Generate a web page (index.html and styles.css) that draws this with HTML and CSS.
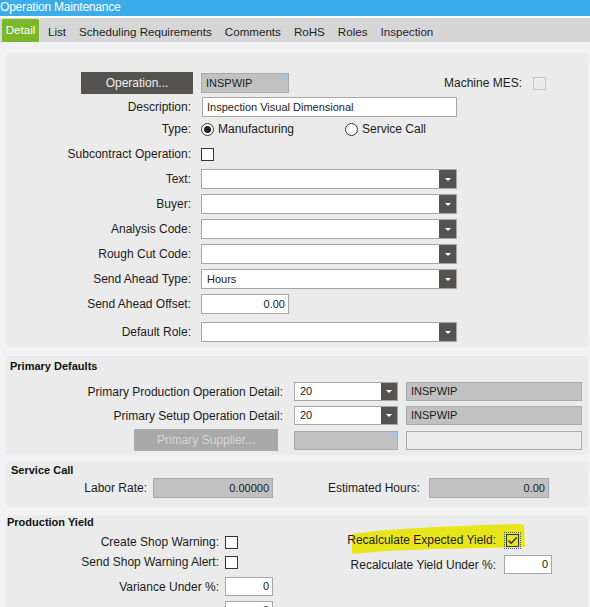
FILE: index.html
```html
<!DOCTYPE html>
<html>
<head>
<meta charset="utf-8">
<title>Operation Maintenance</title>
<link rel="stylesheet" href="styles.css">
</head>
<body>
<div class="titlebar">Operation Maintenance</div>
<nav class="tabs">
  <span class="tab active">Detail</span>
  <span class="tab first">List</span>
  <span class="tab">Scheduling Requirements</span>
  <span class="tab">Comments</span>
  <span class="tab">RoHS</span>
  <span class="tab">Roles</span>
  <span class="tab insp">Inspection</span>
</nav>
<main class="content">
  <section class="panel general">
    <div class="row op-row">
      <button class="btn-dark">Operation...</button>
      <div class="field ro corner op-id">INSPWIP</div>
      <span class="lbl-mes">Machine MES:</span>
      <span class="chk disabled"></span>
    </div>
    <div class="row r-desc">
      <span class="lbl">Description:</span>
      <div class="field input desc">Inspection Visual Dimensional</div>
    </div>
    <div class="row r-type">
      <span class="lbl">Type:</span>
      <span class="radio-opt mfg"><span class="radio on"></span>Manufacturing</span>
      <span class="radio-opt"><span class="radio"></span>Service Call</span>
    </div>
    <div class="row r-sub">
      <span class="lbl">Subcontract Operation:</span>
      <span class="chk"></span>
    </div>
    <div class="row r-dd">
      <span class="lbl">Text:</span>
      <div class="combo wide"><span class="val"></span><span class="arr"></span></div>
    </div>
    <div class="row r-dd">
      <span class="lbl">Buyer:</span>
      <div class="combo wide"><span class="val"></span><span class="arr"></span></div>
    </div>
    <div class="row r-dd">
      <span class="lbl">Analysis Code:</span>
      <div class="combo wide"><span class="val"></span><span class="arr"></span></div>
    </div>
    <div class="row r-dd">
      <span class="lbl">Rough Cut Code:</span>
      <div class="combo wide"><span class="val"></span><span class="arr"></span></div>
    </div>
    <div class="row r-dd">
      <span class="lbl">Send Ahead Type:</span>
      <div class="combo wide"><span class="val">Hours</span><span class="arr"></span></div>
    </div>
    <div class="row r-dd">
      <span class="lbl">Send Ahead Offset:</span>
      <div class="field input num offset">0.00</div>
    </div>
    <div class="row r-role">
      <span class="lbl">Default Role:</span>
      <div class="combo wide"><span class="val"></span><span class="arr"></span></div>
    </div>
  </section>

  <section class="panel prim">
    <h3 class="ph">Primary Defaults</h3>
    <div class="row r-pa">
      <span class="lbl">Primary Production Operation Detail:</span>
      <div class="combo small"><span class="val">20</span><span class="arr"></span></div>
      <div class="field ro long">INSPWIP</div>
    </div>
    <div class="row r-pb">
      <span class="lbl">Primary Setup Operation Detail:</span>
      <div class="combo small"><span class="val">20</span><span class="arr"></span></div>
      <div class="field ro long">INSPWIP</div>
    </div>
    <div class="row r-pc">
      <button class="btn-off">Primary Supplier...</button>
      <div class="field ro corner sup1"></div>
      <div class="field light long"></div>
    </div>
  </section>

  <section class="panel svc">
    <h3 class="ph">Service Call</h3>
    <div class="row r-svc">
      <span class="lbl l1">Labor Rate:</span>
      <div class="field ro num sf">0.00000</div>
      <span class="lbl l2">Estimated Hours:</span>
      <div class="field ro num sf">0.00</div>
    </div>
  </section>

  <section class="panel yield">
    <svg class="hilite" width="584" height="60" viewBox="0 0 584 60">
      <polygon points="346,19 380,15 430,12 480,10 514,9 518,10 519,32 480,33 430,34 380,36 346,39" fill="#e9e51b"/>
    </svg>
    <h3 class="ph">Production Yield</h3>
    <div class="cols">
      <div class="col left">
        <div class="row y1"><span class="lbl">Create Shop Warning:</span><span class="chk"></span></div>
        <div class="row y2"><span class="lbl">Send Shop Warning Alert:</span><span class="chk"></span></div>
        <div class="row y3"><span class="lbl">Variance Under %:</span><div class="field input num pct">0</div></div>
        <div class="row y4"><span class="lbl"></span><div class="field input num pct">0</div></div>
      </div>
      <div class="col right">
        <div class="row z1">
          <span class="lbl">Recalculate Expected Yield:</span>
          <span class="focus"><span class="chk checked"><svg width="11" height="11" viewBox="0 0 11 11"><polyline points="1.5,5.5 4.2,8.3 9.5,2.5" fill="none" stroke="#2b2b2b" stroke-width="1.4"/></svg></span></span>
        </div>
        <div class="row z2"><span class="lbl">Recalculate Yield Under %:</span><div class="field input num pct2">0</div></div>
      </div>
    </div>
  </section>
</main>
</body>
</html>
```

FILE: styles.css
```css
* { box-sizing: border-box; }
html, body { margin: 0; padding: 0; }
body {
  width: 590px;
  height: 607px;
  overflow: hidden;
  background: #f2f2f4;
  font-family: "Liberation Sans", Arial, sans-serif;
  font-size: 12px;
  color: #1c1c1c;
}

.titlebar {
  height: 18px;
  background: #3cadea;
  border-bottom: 2px solid #fff;
  color: #fff;
  font-size: 12px;
  line-height: 15px;
  white-space: nowrap;
  letter-spacing: -0.2px;
}

.tabs {
  height: 24px;
  background: #d6d6d6;
  display: flex;
  align-items: stretch;
}
.tab {
  font-size: 11.6px;
  line-height: 28px;
  padding: 0 6.5px;
  color: #1c1c1c;
  white-space: nowrap;
}
.tab.active {
  margin-left: 1px;
  width: 39px;
  padding: 0;
  text-align: center;
  background: #79b82a;
  color: #fff;
  border: 1px solid #cfe5b2;
  border-bottom: none;
  border-radius: 3px 3px 0 0;
  line-height: 22px;
}
.tab.first { padding-left: 8px; }
.tab.insp { color: #2e1a3c; }

.content { padding: 11px 2px 0 6px; }
.panel {
  background: #ebebeb;
  border-radius: 4px;
  position: relative;
}
.row { display: flex; align-items: center; }
.lbl { flex: none; text-align: right; white-space: nowrap; }

.field {
  flex: none;
  height: 20px;
  border: 1px solid #a6a6a6;
  font-size: 11px;
  line-height: 18px;
  padding: 0 4px;
  white-space: nowrap;
  overflow: hidden;
  position: relative;
}
.field.input { background: #fff; }
.field.ro { background: #c1c1c1; border-color: #a9a9a9; }
.field.light { background: #ececec; border-color: #ababab; }
.field.num { text-align: right; padding-right: 3px; }
.corner::after {
  content: "";
  position: absolute;
  top: 0;
  right: 0;
  border-top: 8px solid #a9c4e6;
  border-left: 8px solid transparent;
}

.combo {
  flex: none;
  display: flex;
  height: 20px;
  border: 1px solid #a6a6a6;
  background: #fff;
  font-size: 11px;
}
.combo .val { flex: 1; padding-left: 5px; line-height: 18px; }
.combo .arr {
  width: 17px;
  background: #545351;
  display: flex;
  align-items: center;
  justify-content: center;
}
.combo .arr::before {
  content: "";
  border-left: 3px solid transparent;
  border-right: 3px solid transparent;
  border-top: 3px solid #fff;
}

.chk {
  flex: none;
  display: inline-block;
  width: 13px;
  height: 13px;
  border: 1px solid #333;
  background: #fff;
}
.chk.disabled { border-color: #c6c6c6; background: #ebebeb; }
.chk.checked { background: transparent; display: flex; align-items: center; justify-content: center; }
.focus {
  flex: none;
  display: inline-flex;
  padding: 1px;
  border: 1px dotted #3a5a9a;
}

.radio-opt { display: inline-flex; align-items: center; white-space: nowrap; }
.radio-opt.mfg { width: 144px; }
.radio {
  width: 13px;
  height: 13px;
  border: 1px solid #333;
  border-radius: 50%;
  background: #fff;
  margin-right: 4px;
  display: inline-flex;
  align-items: center;
  justify-content: center;
}
.radio.on::before {
  content: "";
  width: 7px;
  height: 7px;
  border-radius: 50%;
  background: #222;
}

button {
  font-family: "Liberation Sans", Arial, sans-serif;
  font-size: 12px;
  border: none;
  padding: 0;
  flex: none;
}
.btn-dark {
  width: 112px;
  height: 22px;
  margin-left: 75px;
  background: #555350;
  color: #efefef;
}
.btn-off {
  width: 144px;
  height: 22px;
  margin-left: 128px;
  margin-right: 16px;
  background: #a9a9a9;
  color: #d6d6d6;
}

/* general panel */
.general { height: 294px; padding-top: 19px; }
.general .lbl { width: 185px; margin-right: 10px; }
.op-row { height: 22px; }
.op-id { margin-left: 8px; width: 88px; height: 20px; padding-left: 4px; }
.lbl-mes { margin-left: auto; margin-right: 11px; }
.op-row .chk { margin-right: 42px; }
.r-desc { margin-top: 3px; height: 20px; }
.desc { width: 255px; margin-left: 1px; }
.r-type { margin-top: 2px; height: 20px; }
.r-type .radio-opt:first-of-type { margin-left: 1px; }
.r-sub { margin-top: 5px; height: 20px; }
.r-dd { margin-top: 5px; height: 20px; }
.r-role { margin-top: 8px; height: 20px; }
.combo.wide { width: 256px; }
.offset { width: 88px; }

/* section headers */
.ph {
  margin: 0;
  font-size: 11px;
  font-weight: bold;
  line-height: 13px;
  color: #111;
}

/* primary defaults */
.prim { margin-top: 9px; height: 99px; }
.prim .ph { padding: 4px 0 0 4px; }
.prim .lbl { width: 277px; margin-right: 11px; }
.r-pa { margin-top: 9px; height: 19px; }
.r-pb { margin-top: 5px; height: 19px; }
.r-pc { margin-top: 4px; height: 22px; }
.combo.small { width: 104px; height: 19px; }
.combo.small .arr { width: 16px; }
.combo.small .val { line-height: 17px; }
.field.long { width: 176px; margin-left: 8px; height: 19px; line-height: 17px; }
.sup1 { width: 104px; height: 19px; }
.r-pc .field.long { height: 19px; }

/* service call */
.svc { margin-top: 7px; height: 45px; }
.svc .ph { padding: 2px 0 0 5px; }
.r-svc { margin-top: 1px; height: 20px; }
.svc .l1 { width: 141px; margin-right: 6px; }
.svc .l2 { width: 147px; margin-right: 9px; }
.sf { width: 120px; height: 20px; padding-right: 4px; }

/* production yield */
.yield { margin-top: 8px; height: 100px; }
.yield .ph { padding: 1px 0 0 1px; }
.hilite { position: absolute; left: 0; top: 0; }
.cols { position: relative; display: flex; }
.col.left { width: 300px; }
.col.left .lbl { width: 213px; margin-right: 6px; }
.col.right .lbl { width: 190px; margin-right: 8px; }
.y1 { margin-top: 3px; height: 20px; }
.y2 { height: 20px; }
.y3 { margin-top: 5px; height: 19px; }
.y4 { margin-top: 5px; height: 19px; }
.pct { width: 48px; height: 19px; line-height: 17px; }
.z1 { margin-top: 1px; height: 20px; }
.z2 { margin-top: 5px; height: 19px; }
.pct2 { width: 48px; height: 19px; line-height: 17px; }
```
